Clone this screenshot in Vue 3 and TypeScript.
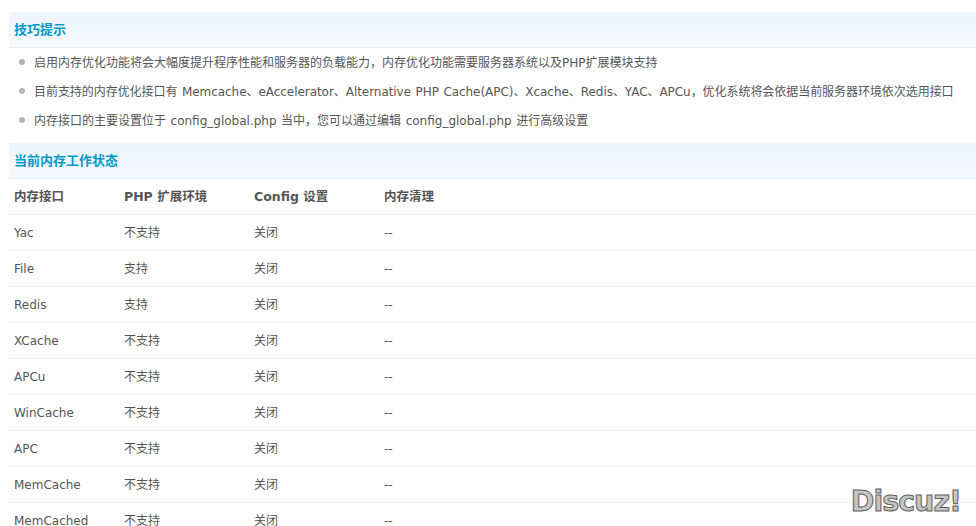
<script setup lang="ts">
const tips: string[] = [
  '启用内存优化功能将会大幅度提升程序性能和服务器的负载能力，内存优化功能需要服务器系统以及PHP扩展模块支持',
  '目前支持的内存优化接口有 Memcache、eAccelerator、Alternative PHP Cache(APC)、Xcache、Redis、YAC、APCu，优化系统将会依据当前服务器环境依次选用接口',
  '内存接口的主要设置位于 config_global.php 当中，您可以通过编辑 config_global.php 进行高级设置',
]
const heads: string[] = ['内存接口', 'PHP 扩展环境', 'Config 设置', '内存清理']
const rows: [string, string][] = [
  ['Yac', '不支持'],
  ['File', '支持'],
  ['Redis', '支持'],
  ['XCache', '不支持'],
  ['APCu', '不支持'],
  ['WinCache', '不支持'],
  ['APC', '不支持'],
  ['MemCache', '不支持'],
  ['MemCached', '不支持'],
]
</script>

<template>
  <div class="page">
    <h3 class="title">技巧提示</h3>
    <ul class="tips">
      <li v-for="tip in tips" :key="tip">{{ tip }}</li>
    </ul>
    <h3 class="title">当前内存工作状态</h3>
    <div class="row head">
      <span v-for="h in heads" :key="h">{{ h }}</span>
    </div>
    <div v-for="r in rows" :key="r[0]" class="row">
      <span>{{ r[0] }}</span>
      <span>{{ r[1] }}</span>
      <span>关闭</span>
      <span>--</span>
    </div>
    <div class="mark">Discuz!</div>
  </div>
</template>

<style>
html, body { margin: 0; background: #fff; overflow: hidden; }
</style>

<style scoped>
.page {
  height: 526px;
  overflow: hidden;
  padding: 12px 0 0 9px;
  box-sizing: border-box;
  position: relative;
  font-family: "DejaVu Sans", "Noto Sans CJK SC", sans-serif;
  font-size: 12px;
  color: #555;
}
.title {
  margin: 0;
  height: 35px;
  line-height: 36px;
  padding-left: 5px;
  font-size: 13px;
  font-weight: bold;
  color: #09c;
  background: linear-gradient(#eff5fc, #f6f9fd);
  border-bottom: 1px dotted #d8ebfa;
}
.tips {
  list-style: none;
  margin: 0;
  padding: 0 0 8px 0;
}
.tips li {
  height: 29px;
  line-height: 31px;
  padding-left: 25px;
  position: relative;
  white-space: nowrap;
  word-spacing: 0.75px;
}
.tips li:nth-child(2) { letter-spacing: -0.05px; }
.tips li::before {
  content: "";
  position: absolute;
  left: 9.5px;
  top: 11px;
  width: 6px;
  height: 6px;
  border-radius: 50%;
  background: #b5b5b5;
}
.row {
  display: grid;
  grid-template-columns: 110px 130px 130px 1fr;
  height: 35px;
  line-height: 36px;
  padding-left: 5px;
  border-bottom: 1px dotted #d8eefc;
}
.head { font-weight: bold; font-size: 12.5px; }
.mark {
  position: absolute;
  right: 15px;
  bottom: 7px;
  font-family: "DejaVu Sans", sans-serif;
  font-weight: bold;
  font-size: 28.5px;
  line-height: 34px;
  letter-spacing: -1px;
  color: #c4c4c4;
  -webkit-text-stroke: 1px #5f5f5f;
}
</style>
